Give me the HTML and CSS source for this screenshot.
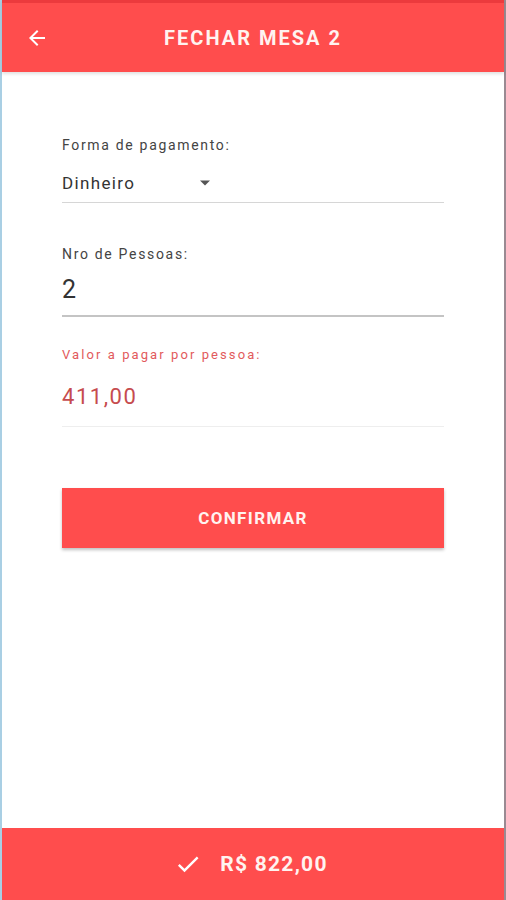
FILE: index.html
```html
<!DOCTYPE html>
<html lang="pt-BR">
<head>
<meta charset="utf-8">
<title>Fechar Mesa 2</title>
<link rel="stylesheet" href="styles.css">
</head>
<body>
<div class="app">
  <header class="topbar">
    <button class="back" aria-label="Voltar">
      <svg width="24" height="24" viewBox="0 0 24 24"><path d="M20 11H7.83l5.59-5.59L12 4l-8 8 8 8 1.41-1.41L7.83 13H20v-2z" fill="#fff"/></svg>
    </button>
    <h1 class="title">FECHAR MESA 2</h1>
  </header>
  <main class="content">
    <div class="field">
      <label class="label">Forma de pagamento:</label>
      <div class="select">
        <span class="select-value">Dinheiro</span>
        <svg class="caret" width="10" height="6" viewBox="0 0 10 5"><path d="M0 0h10L5 5z" fill="#555"/></svg>
      </div>
    </div>
    <div class="field field-people">
      <label class="label">Nro de Pessoas:</label>
      <div class="input">2</div>
    </div>
    <div class="field field-value">
      <label class="label label-red">Valor a pagar por pessoa:</label>
      <div class="value">411,00</div>
    </div>
    <button class="confirm">CONFIRMAR</button>
  </main>
  <footer class="total">
    <svg width="32" height="28" viewBox="0 0 24 24"><path d="M9 16.17L4.83 12l-1.42 1.41L9 19 21 7l-1.41-1.41z" fill="#fff"/></svg>
    <span class="total-text">R$ 822,00</span>
  </footer>
</div>
</body>
</html>
```
FILE: styles.css
```css
* { box-sizing: border-box; }
html, body { margin: 0; padding: 0; }
body {
  font-family: Roboto, "Liberation Sans", sans-serif;
  background: #fff;
}
.app {
  height: 900px;
  display: flex;
  flex-direction: column;
  border-left: 2px solid #a9cfe4;
  border-right: 2px solid #9a8a92;
  background: #fff;
}
.topbar {
  height: 72px;
  flex: none;
  background: #ff4d4d;
  border-top: 3px solid #ec3a3d;
  display: flex;
  align-items: center;
  position: relative;
  box-shadow: 0 2px 3px rgba(0,0,0,0.12);
  z-index: 1;
}
.back {
  background: none;
  border: 0;
  padding: 0;
  margin-left: 23px;
  width: 24px;
  height: 24px;
  display: flex;
  align-items: center;
  justify-content: center;
}
.title {
  margin: 0;
  position: absolute;
  left: 0;
  right: 0;
  text-align: center;
  color: #fff3f0;
  font-size: 20px;
  font-weight: 700;
  letter-spacing: 0.1em;
  pointer-events: none;
}
.content {
  flex: 1;
  padding: 63px 60px 0 60px;
  display: flex;
  flex-direction: column;
}
.field { display: flex; flex-direction: column; }
.label {
  font-size: 14px;
  line-height: 20px;
  color: #444;
  letter-spacing: 0.12em;
}
.select {
  margin-top: 16px;
  display: flex;
  align-items: center;
  padding-bottom: 7px;
  border-bottom: 1px solid #d6d6d6;
  height: 32px;
}
.select-value {
  font-size: 17px;
  line-height: 24px;
  color: #333;
  letter-spacing: 0.08em;
  width: 138px;
}
.field-people { margin-top: 41px; }
.input {
  margin-top: 11px;
  font-size: 25px;
  line-height: 30px;
  color: #333;
  padding-bottom: 10px;
  border-bottom: 2px solid #c4c4c4;
}
.field-value { margin-top: 28px; }
.label-red { color: #e25a5c; font-size: 13px; letter-spacing: 0.16em; }
.value {
  margin-top: 18px;
  font-size: 22px;
  line-height: 28px;
  color: #c64b4e;
  letter-spacing: 0.07em;
  padding-bottom: 15px;
  border-bottom: 1px solid #eeeeee;
}
.confirm {
  margin-top: 61px;
  height: 60px;
  border: 0;
  background: #ff4d4d;
  color: #fff3f0;
  font-family: Roboto, "Liberation Sans", sans-serif;
  font-size: 17px;
  font-weight: 700;
  letter-spacing: 0.08em;
  box-shadow: 0 2px 3px rgba(0,0,0,0.25);
}
.total {
  height: 72px;
  flex: none;
  background: #ff4d4d;
  display: flex;
  align-items: center;
  justify-content: center;
  gap: 16px;
  padding-right: 6px;
}
.total-text {
  color: #fff3f0;
  font-size: 21px;
  font-weight: 700;
  letter-spacing: 0.06em;
}
```
